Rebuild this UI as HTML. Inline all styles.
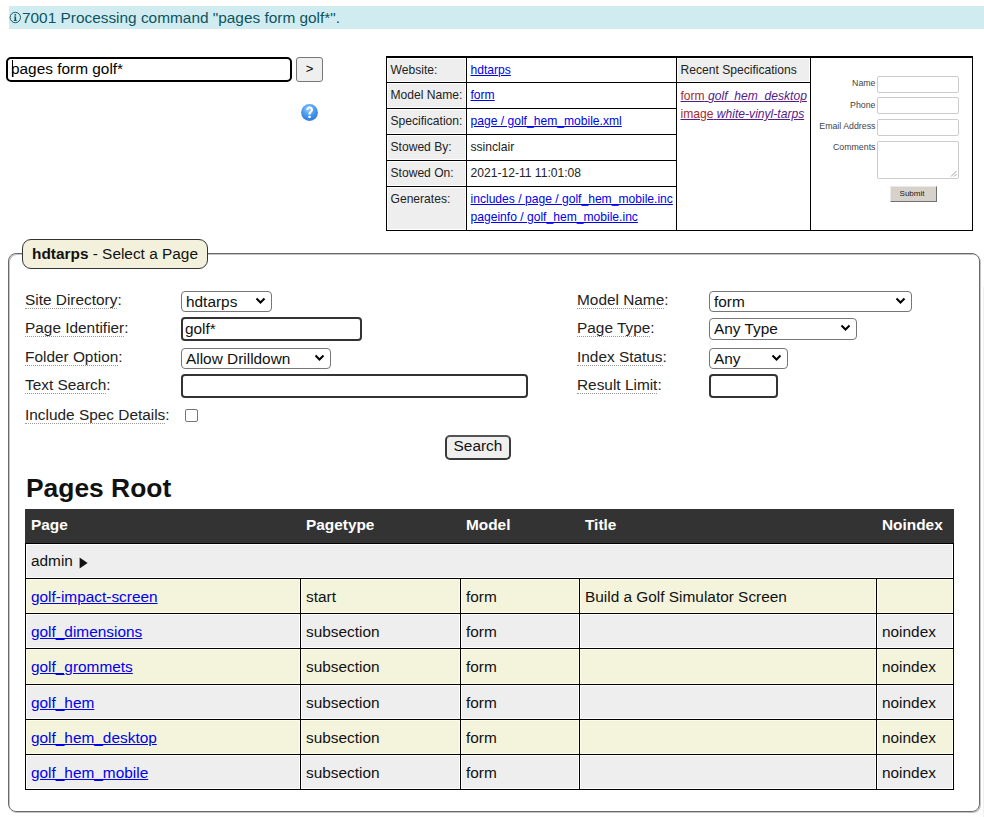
<!DOCTYPE html>
<html><head><meta charset="utf-8">
<style>
*{box-sizing:border-box;}
html,body{margin:0;padding:0;background:#fff;}
body{font-family:"Liberation Sans",sans-serif;color:#222;width:984px;height:817px;overflow:hidden;position:relative;}
.abs{position:absolute;}
#banner{left:9px;top:6px;width:975px;height:23px;background:#d1ecf1;color:#0c5460;font-size:15.4px;line-height:23px;white-space:nowrap;}
#cmd{left:6px;top:57px;width:286px;height:25px;border:2px solid #000;border-radius:5px;font-size:15.4px;line-height:19px;padding-left:3px;color:#000;}
#go{left:296px;top:57px;width:27px;height:25px;border:1px solid #767676;border-radius:3px;background:#efefef;font-size:13px;line-height:22px;text-align:center;color:#000;}
#help{left:301px;top:104px;width:17px;height:17px;}
#info .bk{position:absolute;background:#000;}
#info .gr{position:absolute;background:#eee;}
#info .c{position:absolute;font-size:12.1px;color:#222;white-space:nowrap;line-height:14px;}
#info a{color:#0000ee;text-decoration:underline;}
#info a.v{color:#551a8b;}
#info .t{position:absolute;font-size:8.8px;color:#444;text-align:right;width:100px;line-height:10px;}
#info .i{position:absolute;border:1px solid #ccc;border-radius:2px;background:#fff;}
#fs{left:8px;top:253px;width:972px;height:559px;border:1px solid #6a6a6a;border-radius:8px;box-shadow:inset 1px 1px 0 #c4c4c4, 1px 1px 0 #c4c4c4;}
#legend{left:22px;top:239px;width:186px;height:30px;border:1px solid #333;border-radius:9px;background:#f3f1dc;font-size:15.4px;line-height:28px;padding-left:9px;color:#111;white-space:nowrap;}
.fl{position:absolute;font-size:15.4px;color:#222;line-height:15px;white-space:nowrap;}
.fl .u{border-bottom:1px dotted #999;padding-bottom:1px;display:inline-block;line-height:15px;}
.sel{position:absolute;border:1px solid #767676;border-radius:4px;background:#fff;font-size:15.4px;color:#111;padding-left:4px;line-height:19px;white-space:nowrap;}
.sel svg{position:absolute;right:5px;top:5px;}
.inp{position:absolute;border:2px solid #333;border-radius:4px;background:#fff;font-size:15.4px;color:#111;padding-left:2px;line-height:19px;}
#title{left:26px;top:473px;font-size:26.4px;font-weight:bold;color:#111;white-space:nowrap;}
#tb div{position:absolute;}
#tb .hd{background:#333;}
#tb .bg.g{background:#eee;box-shadow:inset 0 0 0 1px #fff;}
#tb .bg.y{background:#f4f3dc;box-shadow:inset 0 0 0 1px #fffde6;}

#tb .ht{color:#fff;font-weight:bold;font-size:15.4px;line-height:18px;white-space:nowrap;}
#tb .ln{background:#000;}
#tb .tx{font-size:15.4px;line-height:18px;color:#111;white-space:nowrap;}
#tb a{color:#0000ee;text-decoration:underline;}
</style></head>
<body>
<div id="banner" class="abs"><svg width="13" height="13" viewBox="0 0 13 13" style="position:absolute;left:0;top:5px"><circle cx="6.3" cy="6.5" r="5.2" fill="none" stroke="#0c5460" stroke-width="0.95"/><rect x="5.5" y="3.1" width="1.6" height="1.5" fill="#0c5460"/><path d="M4.9 5.4 H7.1 V9.2 H7.9 V9.9 H4.7 V9.2 H5.5 V6.1 H4.9 Z" fill="#0c5460"/></svg><span style="position:absolute;left:13px;top:0">7001 Processing command "pages form golf*".</span></div>
<div id="cmd" class="abs">pages form golf*<div style="position:absolute;left:3.5px;top:1px;width:1px;height:17px;background:#000"></div></div>
<div id="go" class="abs">&gt;</div>
<svg id="help" class="abs" viewBox="0 0 17 17"><defs><radialGradient id="hg" cx="0.45" cy="0.3" r="0.75"><stop offset="0" stop-color="#9ccffc"/><stop offset="0.5" stop-color="#4a9bf0"/><stop offset="1" stop-color="#2f74d6"/></radialGradient></defs><circle cx="8.5" cy="8.5" r="8.4" fill="url(#hg)"/><path d="M5.2 6 C5.2 3.8 6.8 2.6 8.6 2.6 C10.6 2.6 12 3.9 12 5.8 C12 8.2 9.6 8.3 9.6 10.6 L7.4 10.6 C7.4 7.6 9.7 7.5 9.7 5.9 C9.7 5.1 9.2 4.6 8.5 4.6 C7.7 4.6 7.3 5.2 7.3 6 Z" fill="#fff"/><rect x="7.4" y="11.7" width="2.2" height="2.2" rx="0.5" fill="#fff"/></svg>

<div id="info">
  <div class="bk" style="left:386px;top:56px;width:587px;height:2px;"></div>
  <div class="bk" style="left:386px;top:56px;width:1px;height:175px;"></div>
  <div class="bk" style="left:972px;top:56px;width:1px;height:175px;"></div>
  <div class="bk" style="left:386px;top:230px;width:587px;height:1px;"></div>
  <div class="bk" style="left:466px;top:56px;width:1px;height:175px;"></div>
  <div class="bk" style="left:676px;top:56px;width:1px;height:175px;"></div>
  <div class="bk" style="left:810px;top:56px;width:1px;height:175px;"></div>
  <div class="bk" style="left:386px;top:82px;width:424px;height:1px;"></div>
  <div class="bk" style="left:386px;top:108px;width:290px;height:1px;"></div>
  <div class="bk" style="left:386px;top:134px;width:290px;height:1px;"></div>
  <div class="bk" style="left:386px;top:160px;width:290px;height:1px;"></div>
  <div class="bk" style="left:386px;top:186px;width:290px;height:1px;"></div>
  <div class="gr" style="left:388px;top:59px;width:77px;height:22px;"></div>
  <div class="gr" style="left:388px;top:84px;width:77px;height:23px;"></div>
  <div class="gr" style="left:388px;top:110px;width:77px;height:23px;"></div>
  <div class="gr" style="left:388px;top:136px;width:77px;height:23px;"></div>
  <div class="gr" style="left:388px;top:162px;width:77px;height:23px;"></div>
  <div class="gr" style="left:388px;top:188px;width:77px;height:41px;"></div>
  <div class="gr" style="left:678px;top:59px;width:131px;height:22px;"></div>
  <div class="c" style="left:390.5px;top:63px;">Website:</div>
  <div class="c" style="left:390.5px;top:88px;"><span class="u">Model Name</span>:</div>
  <div class="c" style="left:390.5px;top:114px;">Specification:</div>
  <div class="c" style="left:390.5px;top:140px;">Stowed By:</div>
  <div class="c" style="left:390.5px;top:166px;">Stowed On:</div>
  <div class="c" style="left:390.5px;top:192px;">Generates:</div>
  <div class="c" style="left:470.5px;top:63px;"><a>hdtarps</a></div>
  <div class="c" style="left:470.5px;top:88px;"><a>form</a></div>
  <div class="c" style="left:470.5px;top:114px;"><a>page / golf_hem_mobile.xml</a></div>
  <div class="c" style="left:470.5px;top:140px;">ssinclair</div>
  <div class="c" style="left:470.5px;top:166px;">2021-12-11 11:01:08</div>
  <div class="c" style="left:470.5px;top:192px;"><a>includes / page / golf_hem_mobile.inc</a></div>
  <div class="c" style="left:470.5px;top:210px;"><a>pageinfo / golf_hem_mobile.inc</a></div>
  <div class="c" style="left:680.5px;top:63px;">Recent Specifications</div>
  <div class="c" style="left:680.5px;top:89px;"><a class="v"><span style="color:#a52a2a">form</span> <i>golf_hem_desktop</i></a></div>
  <div class="c" style="left:680.5px;top:107px;"><a class="v"><span style="color:#a52a2a">image</span> <i>white-vinyl-tarps</i></a></div>
  <div class="t" style="left:775.5px;top:78px;">Name</div>
  <div class="t" style="left:775.5px;top:100px;">Phone</div>
  <div class="t" style="left:775.5px;top:121px;">Email Address</div>
  <div class="t" style="left:775.5px;top:142px;">Comments</div>
  <div class="i" style="left:877px;top:76px;width:82px;height:17px;"></div>
  <div class="i" style="left:877px;top:97px;width:82px;height:17px;"></div>
  <div class="i" style="left:877px;top:119px;width:82px;height:17px;"></div>
  <div class="i" style="left:877px;top:141px;width:82px;height:38px;"><svg width="7" height="7" viewBox="0 0 7 7" style="position:absolute;right:1px;bottom:1px"><path d="M6.5 1 L1 6.5 M6.5 4 L4 6.5" stroke="#999" stroke-width="0.9"/></svg></div>
  <div class="abs" style="left:890px;top:186px;width:47px;height:16px;background:#d6d2cb;border:1px solid #ebe9e4;border-right-color:#707070;border-bottom-color:#707070;font-size:8px;color:#1a1a1a;text-align:center;line-height:13px;padding-right:3px;">Submit</div>
</div>

<div id="fs" class="abs"></div>
<div class="abs" style="left:983px;top:287px;width:1px;height:530px;background:#f0f0f0"></div>
<div id="legend" class="abs"><b>hdtarps</b> - Select a Page</div>

<div class="fl" style="left:25px;top:292px;"><span class="u">Site Directory</span>:</div>
<div class="fl" style="left:25px;top:320px;"><span class="u">Page Identifier</span>:</div>
<div class="fl" style="left:25px;top:349px;"><span class="u">Folder Option</span>:</div>
<div class="fl" style="left:25px;top:377px;"><span class="u">Text Search</span>:</div>
<div class="fl" style="left:25px;top:407px;"><span class="u">Include Spec Details</span>:</div>
<div class="sel" style="left:181px;top:291px;width:91px;height:21px;">hdtarps<svg width="11" height="8" viewBox="0 0 11 8"><path d="M1.5 1.5 L5.5 5.5 L9.5 1.5" stroke="#000" stroke-width="2" fill="none"/></svg></div>
<div class="inp" style="left:181px;top:317px;width:181px;height:24px;">golf*</div>
<div class="sel" style="left:181px;top:348px;width:150px;height:21px;">Allow Drilldown<svg width="11" height="8" viewBox="0 0 11 8"><path d="M1.5 1.5 L5.5 5.5 L9.5 1.5" stroke="#000" stroke-width="2" fill="none"/></svg></div>
<div class="inp" style="left:181px;top:374px;width:347px;height:24px;"></div>
<div class="abs" style="left:185px;top:409px;width:13px;height:13px;border:1px solid #767676;border-radius:2px;background:#fff;"></div>
<div class="abs" style="left:445px;top:435px;width:66px;height:25px;border:2px solid #3a3a3a;border-top-color:#555;border-radius:5px;background:#efefef;font-size:15.4px;line-height:18px;text-align:center;color:#111;">Search</div>

<div class="fl" style="left:577px;top:292px;"><span class="u">Model Name</span>:</div>
<div class="fl" style="left:577px;top:320px;"><span class="u">Page Type</span>:</div>
<div class="fl" style="left:577px;top:349px;"><span class="u">Index Status</span>:</div>
<div class="fl" style="left:577px;top:377px;"><span class="u">Result Limit</span>:</div>
<div class="sel" style="left:709px;top:291px;width:203px;height:21px;">form<svg width="11" height="8" viewBox="0 0 11 8"><path d="M1.5 1.5 L5.5 5.5 L9.5 1.5" stroke="#000" stroke-width="2" fill="none"/></svg></div>
<div class="sel" style="left:709px;top:318px;width:148px;height:22px;">Any Type<svg width="11" height="8" viewBox="0 0 11 8"><path d="M1.5 1.5 L5.5 5.5 L9.5 1.5" stroke="#000" stroke-width="2" fill="none"/></svg></div>
<div class="sel" style="left:709px;top:348px;width:79px;height:21px;">Any<svg width="11" height="8" viewBox="0 0 11 8"><path d="M1.5 1.5 L5.5 5.5 L9.5 1.5" stroke="#000" stroke-width="2" fill="none"/></svg></div>
<div class="inp" style="left:709px;top:374px;width:69px;height:24px;"></div>

<div id="title" class="abs">Pages Root</div>
<div id="tb">
<div class="hd" style="left:25px;top:509px;width:929px;height:34px;"></div><div class="bg g" style="left:26px;top:544px;width:927px;height:34px;"></div>
<div class="bg y" style="left:26px;top:579px;width:274px;height:34px;"></div>
<div class="bg y" style="left:301px;top:579px;width:159px;height:34px;"></div>
<div class="bg y" style="left:461px;top:579px;width:118px;height:34px;"></div>
<div class="bg y" style="left:580px;top:579px;width:296px;height:34px;"></div>
<div class="bg y" style="left:877px;top:579px;width:76px;height:34px;"></div>
<div class="bg g" style="left:26px;top:614px;width:274px;height:34px;"></div>
<div class="bg g" style="left:301px;top:614px;width:159px;height:34px;"></div>
<div class="bg g" style="left:461px;top:614px;width:118px;height:34px;"></div>
<div class="bg g" style="left:580px;top:614px;width:296px;height:34px;"></div>
<div class="bg g" style="left:877px;top:614px;width:76px;height:34px;"></div>
<div class="bg y" style="left:26px;top:649px;width:274px;height:35px;"></div>
<div class="bg y" style="left:301px;top:649px;width:159px;height:35px;"></div>
<div class="bg y" style="left:461px;top:649px;width:118px;height:35px;"></div>
<div class="bg y" style="left:580px;top:649px;width:296px;height:35px;"></div>
<div class="bg y" style="left:877px;top:649px;width:76px;height:35px;"></div>
<div class="bg g" style="left:26px;top:685px;width:274px;height:34px;"></div>
<div class="bg g" style="left:301px;top:685px;width:159px;height:34px;"></div>
<div class="bg g" style="left:461px;top:685px;width:118px;height:34px;"></div>
<div class="bg g" style="left:580px;top:685px;width:296px;height:34px;"></div>
<div class="bg g" style="left:877px;top:685px;width:76px;height:34px;"></div>
<div class="bg y" style="left:26px;top:720px;width:274px;height:34px;"></div>
<div class="bg y" style="left:301px;top:720px;width:159px;height:34px;"></div>
<div class="bg y" style="left:461px;top:720px;width:118px;height:34px;"></div>
<div class="bg y" style="left:580px;top:720px;width:296px;height:34px;"></div>
<div class="bg y" style="left:877px;top:720px;width:76px;height:34px;"></div>
<div class="bg g" style="left:26px;top:755px;width:274px;height:34px;"></div>
<div class="bg g" style="left:301px;top:755px;width:159px;height:34px;"></div>
<div class="bg g" style="left:461px;top:755px;width:118px;height:34px;"></div>
<div class="bg g" style="left:580px;top:755px;width:296px;height:34px;"></div>
<div class="bg g" style="left:877px;top:755px;width:76px;height:34px;"></div>

<div class="ht" style="left:31px;top:516px;">Page</div>
<div class="ht" style="left:306px;top:516px;">Pagetype</div>
<div class="ht" style="left:466px;top:516px;">Model</div>
<div class="ht" style="left:585px;top:516px;">Title</div>
<div class="ht" style="left:882px;top:516px;">Noindex</div>
<div class="tx" style="left:31px;top:552px;">admin</div>
<svg width="9" height="12" viewBox="0 0 9 12" style="position:absolute;left:78.5px;top:556.5px"><path d="M0.6 0.6 L8.6 6 L0.6 11.4 Z" fill="#111"/></svg>
<div class="tx" style="left:31px;top:588px;"><a>golf-impact-screen</a></div>
<div class="tx" style="left:306px;top:588px;">start</div>
<div class="tx" style="left:466px;top:588px;">form</div>
<div class="tx" style="left:585px;top:588px;">Build a Golf Simulator Screen</div>
<div class="tx" style="left:31px;top:623px;"><a>golf_dimensions</a></div>
<div class="tx" style="left:306px;top:623px;">subsection</div>
<div class="tx" style="left:466px;top:623px;">form</div>
<div class="tx" style="left:882px;top:623px;">noindex</div>
<div class="tx" style="left:31px;top:658px;"><a>golf_grommets</a></div>
<div class="tx" style="left:306px;top:658px;">subsection</div>
<div class="tx" style="left:466px;top:658px;">form</div>
<div class="tx" style="left:882px;top:658px;">noindex</div>
<div class="tx" style="left:31px;top:694px;"><a>golf_hem</a></div>
<div class="tx" style="left:306px;top:694px;">subsection</div>
<div class="tx" style="left:466px;top:694px;">form</div>
<div class="tx" style="left:882px;top:694px;">noindex</div>
<div class="tx" style="left:31px;top:729px;"><a>golf_hem_desktop</a></div>
<div class="tx" style="left:306px;top:729px;">subsection</div>
<div class="tx" style="left:466px;top:729px;">form</div>
<div class="tx" style="left:882px;top:729px;">noindex</div>
<div class="tx" style="left:31px;top:764px;"><a>golf_hem_mobile</a></div>
<div class="tx" style="left:306px;top:764px;">subsection</div>
<div class="tx" style="left:466px;top:764px;">form</div>
<div class="tx" style="left:882px;top:764px;">noindex</div>
<div class="ln" style="left:25px;top:543px;width:929px;height:1px;"></div>
<div class="ln" style="left:25px;top:578px;width:929px;height:1px;"></div>
<div class="ln" style="left:25px;top:613px;width:929px;height:1px;"></div>
<div class="ln" style="left:25px;top:648px;width:929px;height:1px;"></div>
<div class="ln" style="left:25px;top:684px;width:929px;height:1px;"></div>
<div class="ln" style="left:25px;top:719px;width:929px;height:1px;"></div>
<div class="ln" style="left:25px;top:754px;width:929px;height:1px;"></div>
<div class="ln" style="left:25px;top:789px;width:929px;height:1px;"></div>
<div class="ln" style="left:25px;top:543px;width:1px;height:247px;"></div>
<div class="ln" style="left:953px;top:543px;width:1px;height:247px;"></div>
<div class="ln" style="left:300px;top:578px;width:1px;height:212px;"></div>
<div class="ln" style="left:460px;top:578px;width:1px;height:212px;"></div>
<div class="ln" style="left:579px;top:578px;width:1px;height:212px;"></div>
<div class="ln" style="left:876px;top:578px;width:1px;height:212px;"></div>
</div>
</body></html>
